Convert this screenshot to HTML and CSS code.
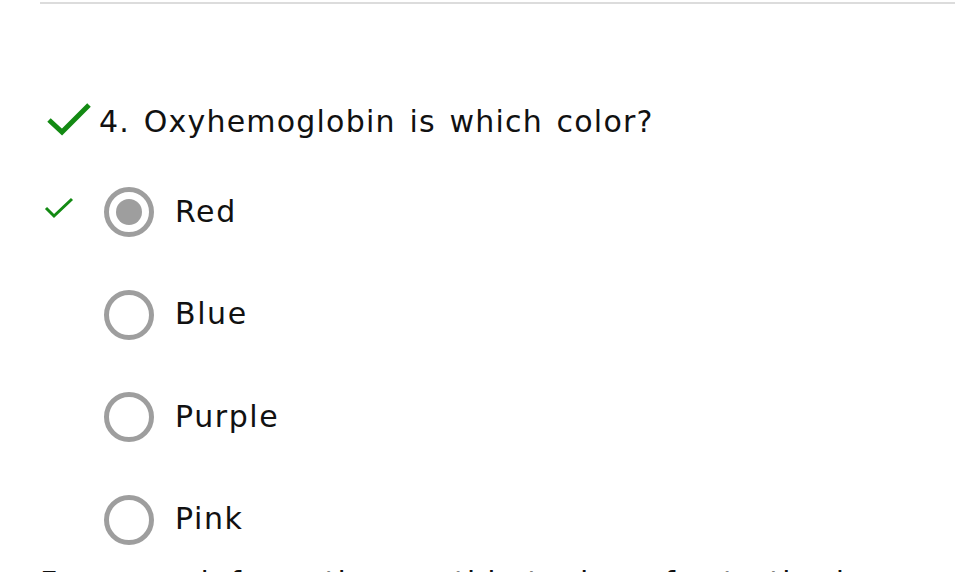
FILE: index.html
```html
<!DOCTYPE html>
<html>
<head>
<meta charset="utf-8">
<link rel="stylesheet" href="styles.css">
</head>
<body>
<div class="page">
  <div class="rule"></div>
  <div class="question">
    <div class="q-head">
      <svg class="q-check" viewBox="0 0 46 34" width="46" height="34"><path d="M3 18 L16 30 L43 3" fill="none" stroke="#138a13" stroke-width="5"/></svg>
      <span class="q-text">4. Oxyhemoglobin is which color?</span>
    </div>
    <ul class="options">
      <li class="option">
        <span class="mark"><svg viewBox="0 0 30 24" width="30" height="24"><path d="M2 12 L10 20 L28 3" fill="none" stroke="#138a13" stroke-width="3"/></svg></span>
        <span class="radio checked"></span>
        <span class="label">Red</span>
      </li>
      <li class="option">
        <span class="mark"></span>
        <span class="radio"></span>
        <span class="label">Blue</span>
      </li>
      <li class="option">
        <span class="mark"></span>
        <span class="radio"></span>
        <span class="label">Purple</span>
      </li>
      <li class="option">
        <span class="mark"></span>
        <span class="radio"></span>
        <span class="label">Pink</span>
      </li>
    </ul>
    <p class="next">For more information on this topic, refer to the lesson above.</p>
  </div>
</div>
</body>
</html>
```
FILE: styles.css
```css
html, body {
  margin: 0;
  padding: 0;
  background: #fff;
  overflow: hidden;
}
body {
  font-family: "DejaVu Sans", Verdana, sans-serif;
  color: #111;
}
.page {
  padding-left: 40px;
}
.rule {
  height: 2px;
  background: #dcdcdc;
  margin-top: 2px;
}
.question {
  padding-top: 97px;
}
.q-head {
  display: flex;
  align-items: center;
  height: 40px;
}
.q-check {
  margin-left: 6px;
  margin-right: 7px;
  margin-top: -4px;
}
.q-text {
  font-size: 30px;
  letter-spacing: 1.2px;
  word-spacing: 3px;
}
.options {
  list-style: none;
  margin: 0;
  padding: 0;
  margin-top: 45px;
}
.option {
  display: flex;
  align-items: center;
  height: 52px;
  margin-bottom: 50.5px;
}
.mark {
  width: 64px;
  display: flex;
  align-items: center;
  margin-top: -8px;
}
.mark svg {
  margin-left: 4px;
}
.radio {
  width: 40px;
  height: 40px;
  border: 5px solid #9e9e9e;
  border-radius: 50%;
  display: flex;
  align-items: center;
  justify-content: center;
  flex: none;
}
.radio.checked::after {
  content: "";
  width: 26px;
  height: 26px;
  border-radius: 50%;
  background: #9e9e9e;
}
.label {
  font-size: 30px;
  letter-spacing: 1.6px;
  margin-left: 21px;
  margin-top: -2px;
}
.next {
  font-size: 30px;
  letter-spacing: 1.2px;
  word-spacing: 3px;
  margin: 0;
  margin-top: -31px;
}
```
